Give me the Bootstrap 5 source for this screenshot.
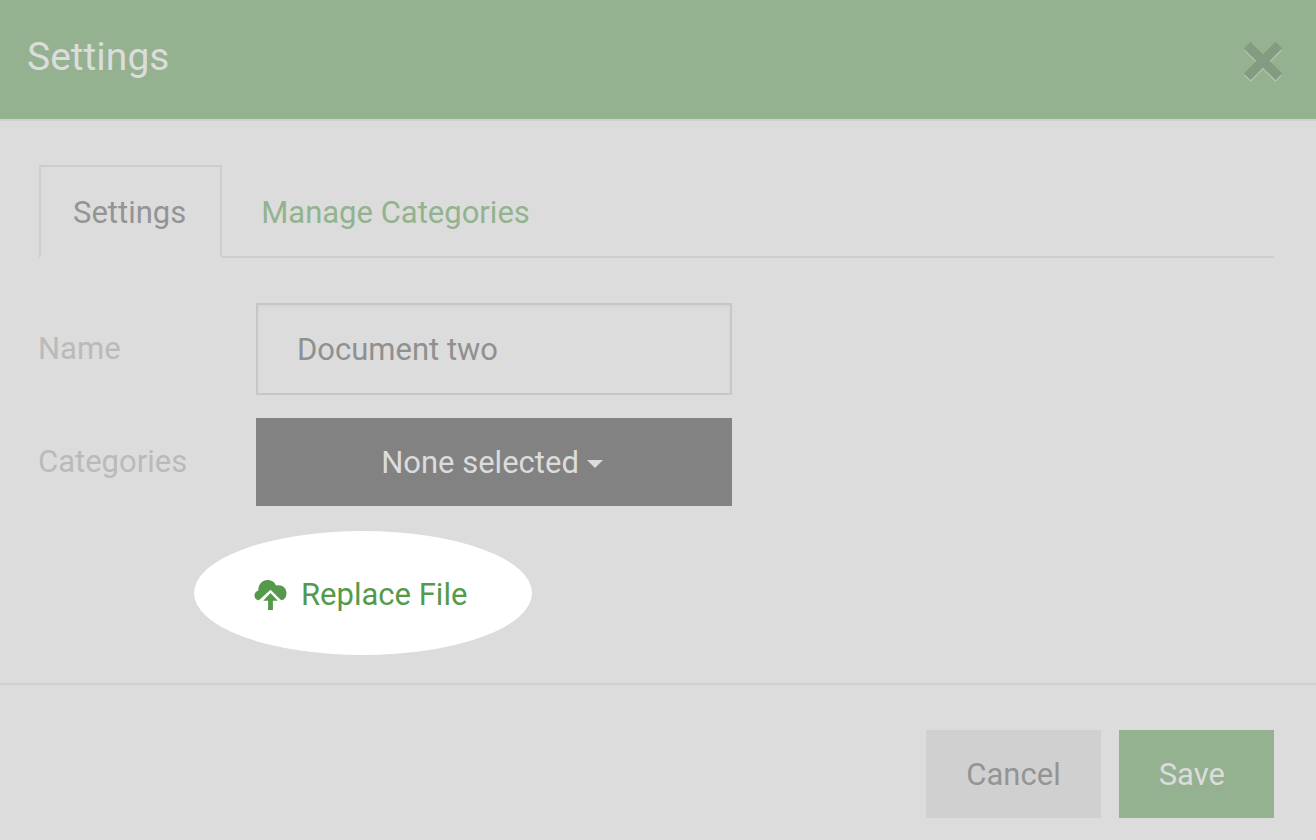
<!DOCTYPE html>
<html lang="en">
<head>
<meta charset="utf-8">
<meta name="viewport" content="width=device-width, initial-scale=1">
<title>Settings</title>
<link href="https://cdn.jsdelivr.net/npm/bootstrap@5.3.0/dist/css/bootstrap.min.css" rel="stylesheet">
<style>
  body { font-family: Roboto, "Liberation Sans", sans-serif; font-size: 31px; line-height: 44px; background: #dcdcdc; color: #949494; }
  .dialog-head { background: #94b190; border-bottom: 2px solid #cfd1cf; padding: 27px 32px 32px 27px; }
  .dialog-head h1 { font-size: 39px; line-height: 60px; font-weight: 400; color: #dcdcdc; }
  .close-btn { margin-top: 10px; line-height: 0; }
  .dialog-main { padding: 44px 42px 28px 38px; }
  .nav-tabs { --bs-nav-tabs-border-width: 2px; --bs-nav-tabs-border-color: #cdcdcd; --bs-nav-tabs-border-radius: 0; margin: 0 0 45px 1px; }
  .nav-tabs .nav-item { margin-right: 5px; }
  .nav-tabs .nav-link { padding: 24px 34px 21px 32px; border-color: transparent; color: #92b38d; }
  .nav-tabs .nav-link.active { color: #949494; background: #dcdcdc; border-color: #cdcdcd #cdcdcd #dcdcdc; }
  .label-cell { width: 218px; color: #bababa; }
  .field-cell { max-width: 476px; }
  .form-control { font-size: 31px; line-height: 44px; padding: 23px 39px 21px; border: 2px solid #c6c6c6; border-radius: 0; background: #dcdcdc; color: #909090; box-shadow: inset 0 2px 2px #d5d5d5; }
  .field-row { margin-top: 23px; }
  .btn { --bs-btn-font-size: 31px; --bs-btn-line-height: 44px; --bs-btn-padding-x: 40px; --bs-btn-border-width: 0; --bs-btn-border-radius: 0; padding-top: 23px; padding-bottom: 21px; }
  .btn-picker, .btn-picker:hover { background: #828282; color: #dcdcdc; padding-right: 44px; }
  .btn-picker::after { margin-left: 8px; border-top-width: 8px; border-right-width: 8px; border-left-width: 8px; vertical-align: 5px; }
  .btn-cancel { --bs-btn-bg: #d0d0d0; --bs-btn-color: #949494; }
  .btn-save { --bs-btn-bg: #94b190; --bs-btn-color: #dcdcdc; padding-right: 49px; }
  .spotlight { margin: 25px 0 0 156px; width: 338px; height: 124px; border-radius: 50%; background: #fff; padding: 4px 0 0 60px; }
  .spotlight a { color: #549a4a; gap: 14px; }
  .dialog-foot { border-top: 2px solid #cfcfcf; padding: 45px 42px 22px; gap: 18px; }
</style>
</head>
<body>
<header class="dialog-head d-flex justify-content-between align-items-start">
  <h1 class="m-0">Settings</h1>
  <button type="button" class="close-btn border-0 bg-transparent p-0" aria-label="Close">
    <svg width="42" height="46" viewBox="0 0 42 46" aria-hidden="true">
      <path stroke="#b4c8b1" stroke-width="9" stroke-linecap="square" stroke-linejoin="round" d="M8.500 13.500 33.500 38.500M33.500 13.500 8.500 38.500"/>
      <path stroke="#839b81" stroke-width="9.500" stroke-linecap="square" d="M8.500 11.500 33.500 36.500M33.500 11.500 8.500 36.500"/>
    </svg>
  </button>
</header>
<main class="dialog-main">
  <ul class="nav nav-tabs">
    <li class="nav-item"><a class="nav-link active" href="#settings" aria-current="page">Settings</a></li>
    <li class="nav-item"><a class="nav-link" href="#categories">Manage Categories</a></li>
  </ul>
  <form id="settings">
    <div class="d-flex align-items-center">
      <label class="label-cell flex-shrink-0" for="docName">Name</label>
      <div class="field-cell flex-grow-1"><input class="form-control" id="docName" type="text" value="Document two"></div>
    </div>
    <div class="field-row d-flex align-items-center">
      <label class="label-cell flex-shrink-0" for="docCats">Categories</label>
      <div class="field-cell flex-grow-1"><button class="btn btn-picker dropdown-toggle w-100" id="docCats" type="button">None selected</button></div>
    </div>
    <div class="spotlight d-flex align-items-center">
      <a class="d-flex align-items-center text-decoration-none" href="#replace">
        <svg width="33" height="32" viewBox="0 0 34 32" aria-hidden="true">
          <path fill="#549a4a" d="M5 21.500C2 21 .500 19 .500 16.500 .500 14 2.200 12 4.500 11.300 4.200 5 8.500.500 14 .500 18.200.500 21.500 2.800 22.700 6.300 28 4.500 33.500 8.200 33.500 14 33.500 18.500 31 21.200 28 21.500L17 10.500Z"/>
          <path fill="#549a4a" d="M17 14 24.500 22H19.500V31.500H14.500V22H9.500Z"/>
        </svg>
        <span>Replace File</span>
      </a>
    </div>
  </form>
</main>
<footer class="dialog-foot d-flex justify-content-end">
  <button type="button" class="btn btn-cancel">Cancel</button>
  <button type="submit" form="settings" class="btn btn-save">Save</button>
</footer>
<script src="https://cdn.jsdelivr.net/npm/bootstrap@5.3.0/dist/js/bootstrap.bundle.min.js"></script>
</body>
</html>
